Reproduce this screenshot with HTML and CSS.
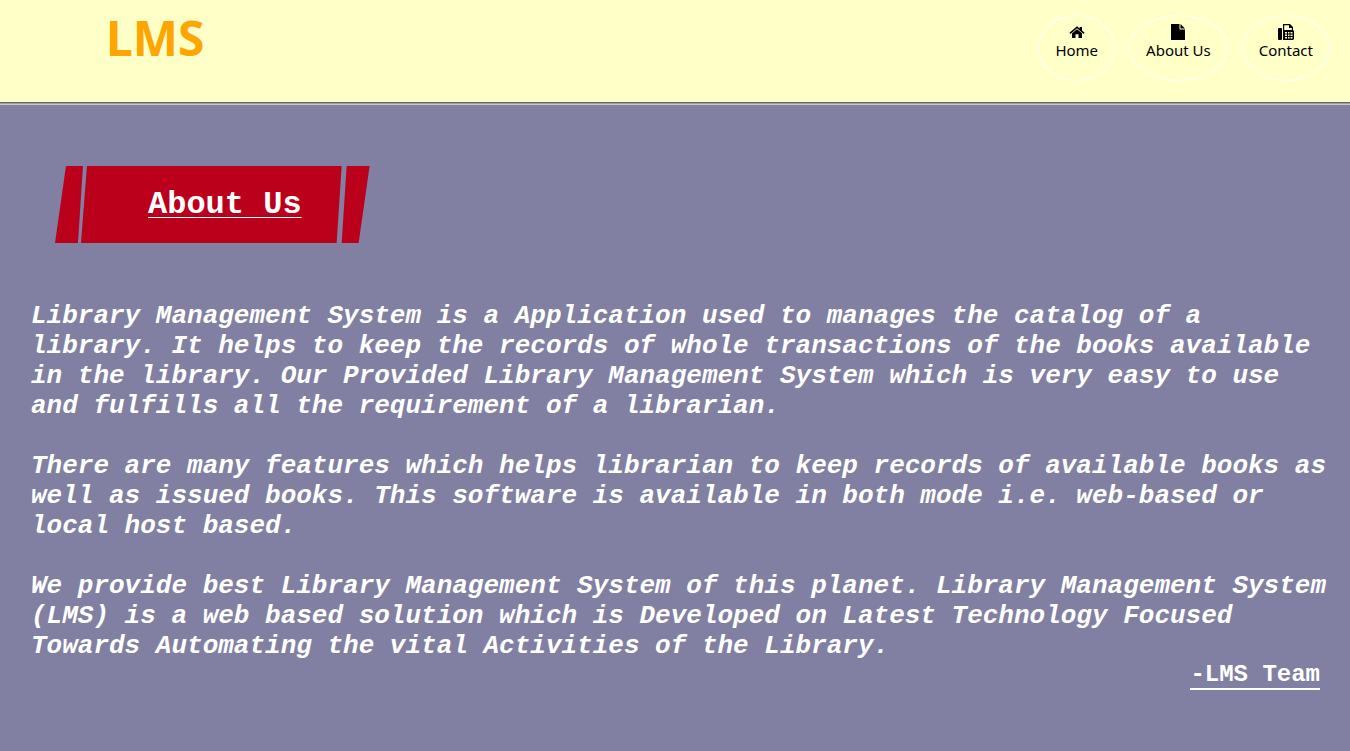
FILE: index.html
```html
<!DOCTYPE html>
<html lang="en">
<head>
<meta charset="utf-8">
<title>LMS - About Us</title>
<link rel="stylesheet" href="styles.css">
</head>
<body>
<header class="site-header">
  <a class="logo" href="#">LMS</a>
  <nav class="nav">
    <a class="nav-link" href="#">
      <svg class="icon" viewBox="0 0 16 16" aria-hidden="true"><path d="M8 5.200 13 9.300V14H9.500V10.200h-3V14H3V9.300z"/><path d="M.4 8.800 8 2.300l2.700 2.300V3h2.300v3.600l2.600 2.200-1 1.100L8 4.300 1.400 9.900z"/></svg>
      Home
    </a>
    <a class="nav-link" href="#about">
      <svg class="icon" viewBox="0 0 16 16" aria-hidden="true"><path d="M1 0h8.500v5.500H15V16H1z"/><path d="M10.500 0 15 4.500H10.500z"/></svg>
      About Us
    </a>
    <a class="nav-link" href="#">
      <svg class="icon" viewBox="0 0 16 16" aria-hidden="true"><path fill-rule="evenodd" d="M1 4h2a1 1 0 0 1 1 1v10a1 1 0 0 1-1 1H1a1 1 0 0 1-1-1V5a1 1 0 0 1 1-1zM5 0h7l3 3v3l1 1v8l-1 1H5zM6.200 1.200v4.800h7.600V4H11V1.200zM7 8v1.500h2V8zm3 0v1.500h1.500V8zm2.500 0v1.500h2V8zM7 10.500V12h2v-1.500zm3 0V12h1.500v-1.500zm2.500 0V12h2v-1.500zM7 13v1.500h2V13zm3 0v1.500h1.500V13zm2.500 0v1.500h2V13z"/></svg>
      Contact
    </a>
  </nav>
</header>
<main class="content" id="about">
  <h1 class="banner">
    <svg class="banner-shape" viewBox="0 0 315 77" preserveAspectRatio="none" aria-hidden="true"><path d="M11 0H28L23 77H0zM32 0H287L282 77H26zM292 0H315L304 77H287z"/></svg>
    <span class="banner-text">About Us</span>
  </h1>
  <div class="story">
    <p>Library Management System is a Application used to manages the catalog of a library. It helps to keep the records of whole transactions of the books available in the library. Our Provided Library Management System which is very easy to use and fulfills all the requirement of a librarian.</p>
    <p>There are many features which helps librarian to keep records of available books as well as issued books. This software is available in both mode i.e. web-based or local host based.</p>
    <p>We provide best Library Management System of this planet. Library Management System (LMS) is a web based solution which is Developed on Latest Technology Focused Towards Automating the vital Activities of the Library.</p>
  </div>
  <div class="signature"><span class="signature-name">-LMS Team</span></div>
</main>
</body>
</html>
```

FILE: styles.css
```css
* {
  box-sizing: border-box;
}

body {
  margin: 0;
  min-height: 100vh;
  background: #8280a2;
  color: #fff;
  font-family: "Liberation Mono", "Courier New", monospace;
}

.site-header {
  display: flex;
  justify-content: space-between;
  align-items: flex-start;
  padding: 15px 20px 21px 106px;
  background: #ffffc8;
  border-bottom: 1px solid #66666a;
  box-shadow: 0 1px 0 #a09f9c, 0 2px 0 #c8c8c4;
  font-family: "Noto Sans", sans-serif;
}

.logo {
  color: #ffa500;
  font-size: 48px;
  font-weight: 700;
  line-height: 46px;
  text-decoration: none;
}

.nav {
  display: flex;
  gap: 14px;
}

.nav-link {
  display: flex;
  flex-direction: column;
  align-items: center;
  height: 66px;
  padding: 8px 16px;
  border: 1px solid #fff;
  border-radius: 50%;
  color: #000;
  font-size: 15px;
  line-height: 20px;
  text-decoration: none;
}

.icon {
  width: 16px;
  height: 16px;
  fill: #000;
}

.content {
  padding: 63px 20px 60px 31px;
}

.banner {
  position: relative;
  width: fit-content;
  margin: 0 0 58px 24px;
  padding: 21px 68px 20px 93px;
  font-size: 32px;
  line-height: 36px;
}

.banner-shape {
  position: absolute;
  inset: 0;
  width: 100%;
  height: 100%;
  fill: #bb001b;
}

.banner-text {
  position: relative;
  text-decoration: underline;
  text-decoration-thickness: 1px;
  text-underline-offset: 4px;
}

.story {
  font-size: 26px;
  font-style: italic;
  font-weight: 700;
  line-height: 30px;
}

.story p {
  margin: 0 0 30px;
}

.story p:last-child {
  margin: 0;
}

.signature {
  padding-right: 10px;
  text-align: right;
}

.signature-name {
  display: inline-block;
  border-bottom: 2px solid #fff;
  font-size: 24px;
  font-weight: 700;
  line-height: 27px;
}
```
